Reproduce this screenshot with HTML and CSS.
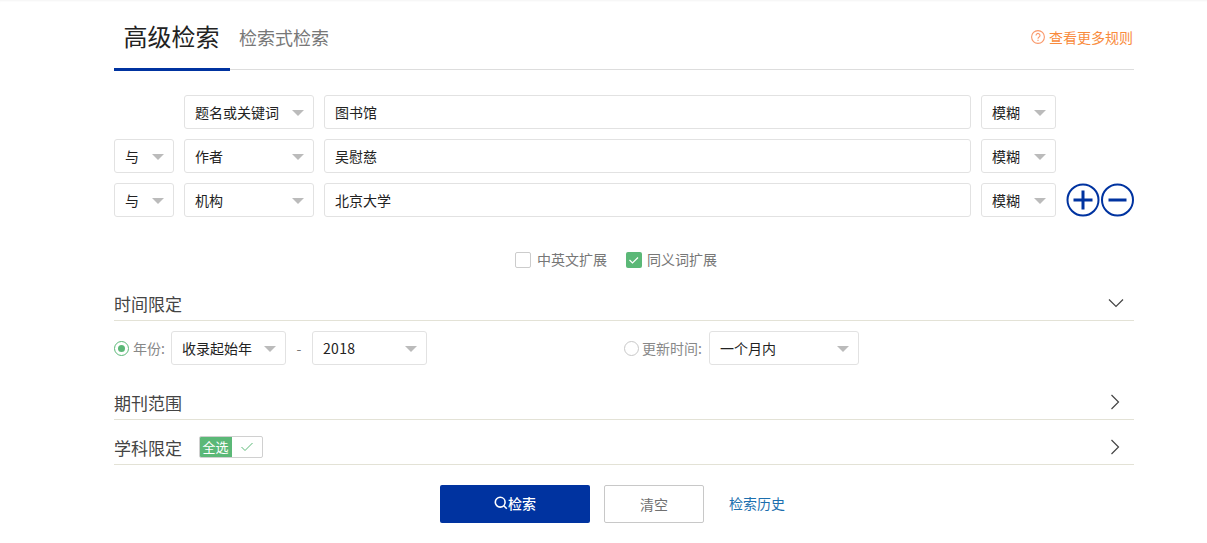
FILE: index.html
```html
<!DOCTYPE html>
<html lang="zh-CN">
<head>
<meta charset="utf-8">
<title>高级检索</title>
<link rel="stylesheet" href="styles.css">
</head>
<body>
<main class="panel">
  <header class="tabs">
    <h1 class="tab tab-active">高级检索</h1>
    <span class="tab tab-other">检索式检索</span>
    <a class="rules">
      <svg class="rules-icon" viewBox="0 0 14 14"><circle cx="7" cy="7" r="6.4"/><path d="M5 5.4a2 2 0 1 1 3.1 1.7c-.7.4-1.1.8-1.1 1.7"/><path d="M7 9.8v1.2"/></svg>
      查看更多规则
    </a>
  </header>

  <section class="rows">
    <div class="row">
      <span></span>
      <div class="select">题名或关键词<i class="caret"></i></div>
      <div class="input">图书馆</div>
      <div class="select">模糊<i class="caret"></i></div>
    </div>
    <div class="row">
      <div class="select">与<i class="caret"></i></div>
      <div class="select">作者<i class="caret"></i></div>
      <div class="input">吴慰慈</div>
      <div class="select">模糊<i class="caret"></i></div>
    </div>
    <div class="row">
      <div class="select">与<i class="caret"></i></div>
      <div class="select">机构<i class="caret"></i></div>
      <div class="input">北京大学</div>
      <div class="select">模糊<i class="caret"></i></div>
      <div class="round-btns">
        <svg class="round" viewBox="0 0 34 34"><circle cx="17" cy="17" r="15.5"/><path d="M7.5 17h19M17 7.5v19"/></svg>
        <svg class="round" viewBox="0 0 34 34"><circle cx="17.5" cy="17" r="15.5"/><path d="M8.5 17h18"/></svg>
      </div>
    </div>
  </section>

  <section class="expand">
    <label class="check"><i class="box"></i>中英文扩展</label>
    <label class="check check-on"><i class="box box-on"><svg viewBox="0 0 16 16"><path d="M3.5 8l3 3 5.5-5.5"/></svg></i>同义词扩展</label>
  </section>

  <section class="block block-time">
    <div class="block-head">
      <span class="block-title">时间限定</span>
      <svg class="chev chev-down" viewBox="0 0 16 10"><path d="M1 1.5l7 7 7-7"/></svg>
    </div>
  </section>
  <div class="time-row">
    <div class="time-group time-year">
      <i class="radio radio-on"></i><span class="time-label label-year">年份:</span>
      <div class="select sel-year">收录起始年<i class="caret"></i></div>
      <span class="dash">-</span>
      <div class="select sel-year sel-num">2018<i class="caret"></i></div>
    </div>
    <div class="time-group">
      <i class="radio"></i><span class="time-label label-update">更新时间:</span>
      <div class="select sel-month">一个月内<i class="caret"></i></div>
    </div>
  </div>

  <section class="block block-journal">
    <div class="block-head">
      <span class="block-title">期刊范围</span>
      <svg class="chev chev-right" viewBox="0 0 10 16"><path d="M1.5 1l7 7-7 7"/></svg>
    </div>
  </section>

  <section class="block block-subject">
    <div class="block-head">
      <span class="block-title">学科限定</span>
      <span class="all"><b class="all-text">全选</b><span class="all-check"><svg viewBox="0 0 14 10"><path d="M1.5 5l3.5 3.5 7.5-7.5"/></svg></span></span>
      <svg class="chev chev-right" viewBox="0 0 10 16"><path d="M1.5 1l7 7-7 7"/></svg>
    </div>
  </section>

  <footer class="actions">
    <button class="btn btn-primary"><svg class="search" viewBox="0 0 14 14"><circle cx="6.2" cy="6.2" r="4.9"/><path d="M9.8 9.8l3 3"/></svg>检索</button>
    <button class="btn btn-clear">清空</button>
    <a class="history">检索历史</a>
  </footer>
</main>
</body>
</html>
```
FILE: styles.css
```css
* { box-sizing: border-box; }
html, body { margin: 0; padding: 0; background: #fff; }
body {
  height: 543px;
  overflow: hidden;
  font-family: "Noto Sans CJK SC", "Noto Sans", sans-serif;
  font-size: 14px;
  color: #333;
  box-shadow: inset 0 2px 2px -1px #f4f4f4;
}
.panel { width: 1020px; margin-left: 114px; }

.tabs {
  display: flex;
  align-items: flex-start;
  height: 70px;
  border-bottom: 1px solid #ddd;
}
.tab { margin: 0; font-weight: 400; }
.tab-active {
  width: 116px;
  height: 71px;
  padding-top: 18px;
  padding-right: 1px;
  font-size: 24px;
  line-height: 36px;
  text-align: center;
  color: #222;
  border-bottom: 3px solid #0033a0;
}
.tab-other {
  margin-left: 9px;
  padding-top: 24px;
  font-size: 18px;
  line-height: 27px;
  color: #777;
}
.rules {
  margin-left: auto;
  padding-top: 27px;
  padding-right: 1px;
  display: flex;
  align-items: center;
  gap: 4px;
  font-size: 14px;
  line-height: 20px;
  color: #f98b3c;
}
.rules-icon { width: 14px; height: 14px; fill: none; stroke: #f9986a; stroke-width: 1.1; }

.rows { margin-top: 25px; display: flex; flex-direction: column; gap: 10px; }
.row {
  display: grid;
  grid-template-columns: 60px 130px 647px 75px auto;
  column-gap: 10px;
  height: 34px;
}
.select, .input {
  position: relative;
  height: 34px;
  padding-left: 10px;
  border: 1px solid #e2e2e2;
  border-radius: 3px;
  background: #fff;
  font-size: 14px;
  line-height: 32px;
  color: #222;
}
.caret {
  position: absolute;
  right: 9px;
  top: 14px;
  border-left: 6px solid transparent;
  border-right: 6px solid transparent;
  border-top: 6px solid #bbb;
}
.round-btns { display: flex; }
.round { width: 34px; height: 34px; fill: none; stroke: #0033a0; stroke-width: 2; }
.round path { stroke-width: 3; }

.expand {
  margin-top: 33px;
  margin-left: 401px;
  display: flex;
  height: 20px;
  align-items: center;
  gap: 19px;
  color: #777;
}
.check { display: flex; align-items: center; gap: 6px; line-height: 16px; margin-top: -3px; }
.check-on { gap: 5px; }
.box {
  width: 16px;
  height: 16px;
  border: 1px solid #ccc;
  border-radius: 2px;
  display: block;
  margin-top: 3px;
}
.box-on { border: 0; background: #5bb877; }
.box-on svg { display: block; width: 16px; height: 16px; fill: none; stroke: #fff; stroke-width: 1.2; }

.block-head {
  display: flex;
  align-items: center;
  height: 100%;
  border-bottom: 1px solid #e3e2d6;
}
.block-title { font-size: 17px; line-height: 24px; color: #444; }
.block-time { margin-top: 20px; height: 31px; }
.block-time .block-head { padding-bottom: 2px; }
.block-journal { margin-top: 19px; height: 36px; }
.block-journal .block-head { padding-top: 3px; }
.block-subject { height: 45px; }
.block-subject .block-head { padding-top: 12px; }
.chev { margin-left: auto; fill: none; stroke: #444; stroke-width: 1.2; }
.chev-down { width: 16px; height: 10px; margin-right: 10px; margin-bottom: 2px; }
.chev-right { width: 10px; height: 16px; margin-right: 14px; margin-bottom: 2px; }

.time-row { display: flex; margin-top: 10px; height: 34px; align-items: center; }
.time-group { display: flex; align-items: center; }
.time-year { width: 510px; }
.radio {
  position: relative;
  width: 15px;
  height: 15px;
  border: 1px solid #c8c8c8;
  border-radius: 50%;
  display: block;
  background: #fff;
}
.radio-on { border-color: #5bb877; }
.radio-on::after {
  content: "";
  position: absolute;
  left: 3px;
  top: 3px;
  width: 7px;
  height: 7px;
  border-radius: 50%;
  background: #5bb877;
}
.time-label { margin-left: 3px; color: #888; white-space: nowrap; }
.label-year { width: 38px; margin-left: 4px; }
.label-update { width: 67px; }
.sel-year { width: 115px; }
.sel-num { letter-spacing: .3px; }
.sel-month { width: 150px; }
.dash { width: 26px; text-align: center; color: #777; }

.actions { margin-top: 20px; margin-left: 326px; display: flex; align-items: center; }
.btn {
  height: 38px;
  font-family: inherit;
  font-size: 14px;
  border-radius: 2px;
  padding: 0;
  display: flex;
  align-items: center;
  justify-content: center;
}
.btn-primary {
  width: 150px;
  background: #0033a0;
  border: 0;
  color: #fff;
  font-weight: 500;
  padding-bottom: 2px;
}
.search { width: 14px; height: 14px; fill: none; stroke: #fff; stroke-width: 1.6; }
.btn-clear {
  width: 100px;
  margin-left: 14px;
  background: #fff;
  border: 1px solid #c8c8c8;
  color: #707070;
}
.history { margin-left: 25px; font-size: 14px; color: #1c6fae; padding-bottom: 2px; }

.all {
  margin-left: 17px;
  width: 64px;
  height: 22px;
  display: flex;
  border: 1px solid #d0d0d0;
  border-radius: 2px;
  overflow: hidden;
  margin-bottom: 2px;
}
.all-text {
  width: 33px;
  margin: -1px 0 -1px -1px;
  background: #5bb877;
  color: #fff;
  font-size: 13px;
  font-weight: 400;
  line-height: 22px;
  text-align: center;
}
.all-check { flex: 1; display: flex; align-items: center; justify-content: center; }
.all-check svg { width: 14px; height: 10px; fill: none; stroke: #5bb877; stroke-width: 1; }
```
